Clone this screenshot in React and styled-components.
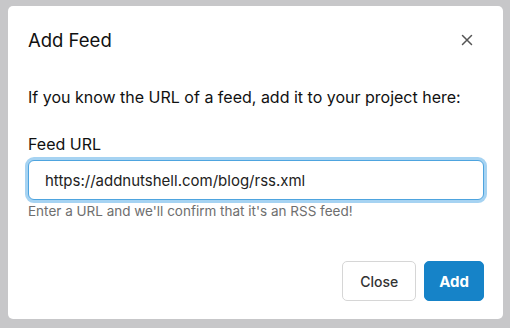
import React, { useState } from 'react';
import styled, { createGlobalStyle } from 'styled-components';

const GlobalStyle = createGlobalStyle`
  html, body {
    margin: 0;
    padding: 0;
    background: #c7c7c9;
  }
  body {
    font-family: Inter, "Liberation Sans", Arial, sans-serif;
    color: #111;
  }
`;

const Backdrop = styled.div`
  width: 510px;
  height: 328px;
  box-sizing: border-box;
  padding: 6px 7px 9px 8px;
`;

const Dialog = styled.div`
  height: 100%;
  background: #fff;
  border-radius: 5px;
  display: flex;
  flex-direction: column;
`;

const Header = styled.header`
  display: flex;
  align-items: center;
  justify-content: space-between;
  padding: 20px 26px 0 20px;
`;

const Title = styled.h2`
  margin: 0;
  font-size: 18.5px;
  font-weight: 400;
  line-height: 28px;
  color: #111;
`;

const CloseIcon = styled.button`
  border: none;
  background: transparent;
  padding: 4px;
  display: inline-flex;
  cursor: pointer;
  color: #555;
`;

const Body = styled.div`
  flex: 1;
  padding: 31px 19px 0 20px;
`;

const Intro = styled.p`
  margin: 0 0 23px;
  font-size: 16px;
  line-height: 24px;
`;

const Label = styled.label`
  display: block;
  font-size: 16px;
  line-height: 24px;
  margin-bottom: 4px;
`;

const Input = styled.input`
  display: block;
  width: 100%;
  box-sizing: border-box;
  height: 40px;
  padding: 0 16px;
  font-family: inherit;
  font-size: 15px;
  color: #222;
  border: 1px solid #4ea4df;
  border-radius: 6px;
  box-shadow: 0 0 0 3px #a6d3f2;
  outline: none;
`;

const Hint = styled.small`
  display: block;
  margin-top: 2px;
  font-size: 13.5px;
  line-height: 18px;
  color: #6e6e6e;
`;

const Footer = styled.footer`
  display: flex;
  justify-content: flex-end;
  gap: 8px;
  padding: 0 19px 18px 20px;
`;

const Button = styled.button`
  height: 40px;
  padding: 0 ${(p) => (p.$primary ? '14px' : '17px')};
  font-family: inherit;
  font-size: ${(p) => (p.$primary ? '15px' : '14px')};
  font-weight: ${(p) => (p.$primary ? 700 : 500)};
  border-radius: 5px;
  cursor: pointer;
  border: 1px solid ${(p) => (p.$primary ? '#1683c8' : '#d6d6d6')};
  background: ${(p) => (p.$primary ? '#1683c8' : '#fff')};
  color: ${(p) => (p.$primary ? '#fff' : '#333')};
`;

const App = () => {
  const [url, setUrl] = useState('https://addnutshell.com/blog/rss.xml');

  return (
    <>
      <GlobalStyle />
      <Backdrop>
        <Dialog>
          <Header>
            <Title>Add Feed</Title>
            <CloseIcon aria-label="Close">
              <svg width="12" height="12" viewBox="0 0 12 12">
                <path d="M1.5 1.5 L10.5 10.5 M10.5 1.5 L1.5 10.5" stroke="currentColor" strokeWidth="1.5" strokeLinecap="round" />
              </svg>
            </CloseIcon>
          </Header>
          <Body>
            <Intro>If you know the URL of a feed, add it to your project here:</Intro>
            <Label htmlFor="feed-url">Feed URL</Label>
            <Input id="feed-url" value={url} onChange={(e) => setUrl(e.target.value)} />
            <Hint>Enter a URL and we'll confirm that it's an RSS feed!</Hint>
          </Body>
          <Footer>
            <Button>Close</Button>
            <Button $primary>Add</Button>
          </Footer>
        </Dialog>
      </Backdrop>
    </>
  );
};

export default App;
